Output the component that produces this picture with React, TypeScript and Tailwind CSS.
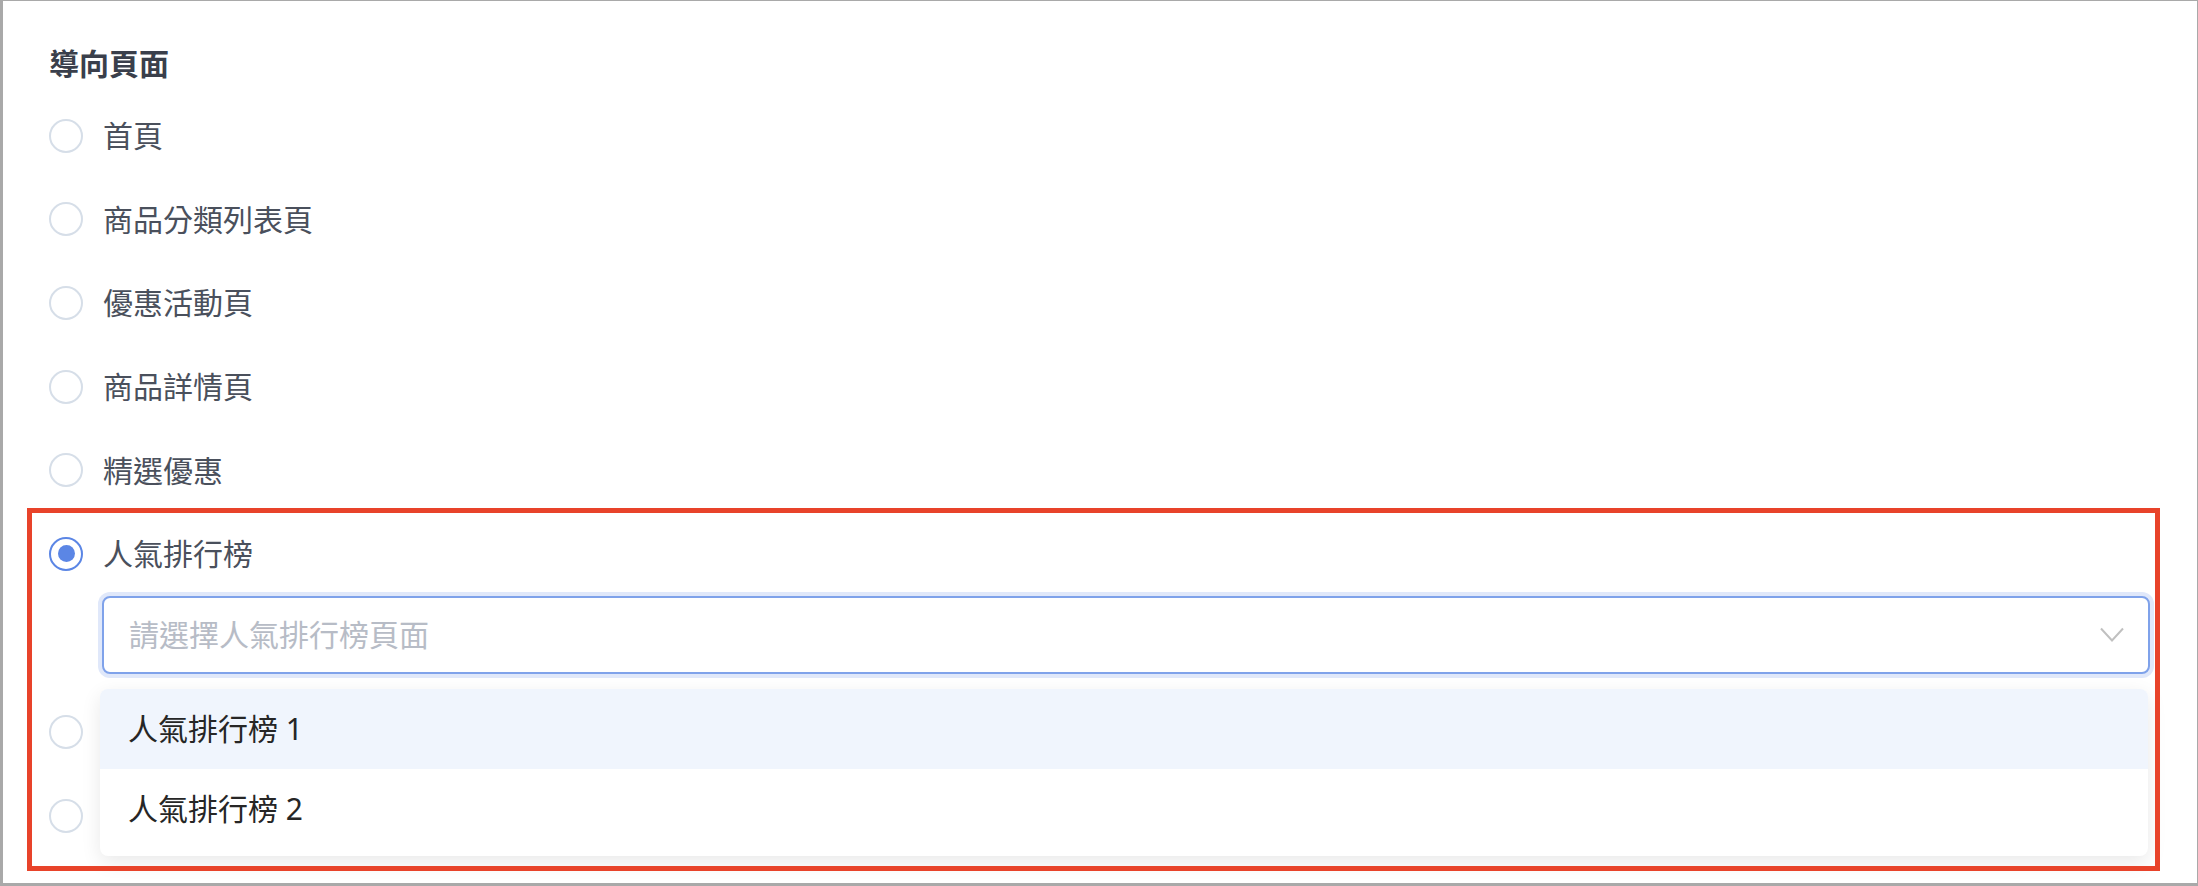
const options = ["首頁", "商品分類列表頁", "優惠活動頁", "商品詳情頁", "精選優惠"];
const rankings = ["人氣排行榜 1", "人氣排行榜 2"];

function Radio({ checked = false }: { checked?: boolean }) {
  return (
    <span
      className={`flex h-[34px] w-[34px] shrink-0 items-center justify-center rounded-full border-2 bg-white ${
        checked ? "border-[#5b86e5]" : "border-[#d6dee8]"
      }`}
    >
      {checked && <span className="h-[17px] w-[17px] rounded-full bg-[#5b86e5]" />}
    </span>
  );
}

function OptionRow({ label, checked }: { label?: string; checked?: boolean }) {
  return (
    <label className="flex h-[83.6px] items-center gap-[20px] text-[30px] text-[#4a505c]">
      <Radio checked={checked} />
      {label && <span>{label}</span>}
    </label>
  );
}

export default function App() {
  return (
    <div
      className="relative box-border h-[886px] w-[2198px] overflow-hidden border-t border-r border-b-[3px] border-l-[3px] border-[#a9a9a9] bg-white pl-[46px] pt-[43px]"
      style={{ fontFamily: '"Noto Sans", "Noto Sans CJK TC", sans-serif' }}
    >
      <h2 className="mb-[10px] text-[30px] font-semibold leading-[40px] text-[#3a3f4b]">導向頁面</h2>

      <div className="flex flex-col">
        {options.map((o) => (
          <OptionRow key={o} label={o} />
        ))}

        <div className="mb-[17px]">
          <OptionRow label="人氣排行榜" checked />
          <div className="relative ml-[53px] mr-[47px]">
            <div className="flex h-[78px] items-center justify-between rounded-[8px] border-2 border-[#7fa2ea] bg-white pl-[25px] pr-[24px] shadow-[0_0_0_4px_#e0e8fa]">
              <span className="text-[30px] text-[#b7bcc6]">請選擇人氣排行榜頁面</span>
              <svg width="24" height="16" viewBox="0 0 24 16" fill="none">
                <path d="M1 1.5 L12 13.5 L23 1.5" stroke="#c0c0c0" strokeWidth="2" />
              </svg>
            </div>

            {/* open menu, covers the labels of the rows below */}
            <div className="absolute left-[-2px] top-[93px] z-10 w-full overflow-hidden rounded-[8px] bg-white pb-[7px] shadow-[0_6px_20px_rgba(0,0,0,0.09)]">
              {rankings.map((r, i) => (
                <div
                  key={r}
                  className={`flex h-[80px] items-center pl-[28px] text-[30px] text-[#262626] ${
                    i === 0 ? "bg-[#f0f5fd]" : ""
                  }`}
                >
                  {r}
                </div>
              ))}
            </div>
          </div>
        </div>

        <OptionRow />
        <OptionRow />
      </div>

      {/* annotation box */}
      <div className="pointer-events-none absolute left-[24px] top-[507px] z-20 h-[363px] w-[2133px] border-[5px] border-[#e8432a]" />
    </div>
  );
}
